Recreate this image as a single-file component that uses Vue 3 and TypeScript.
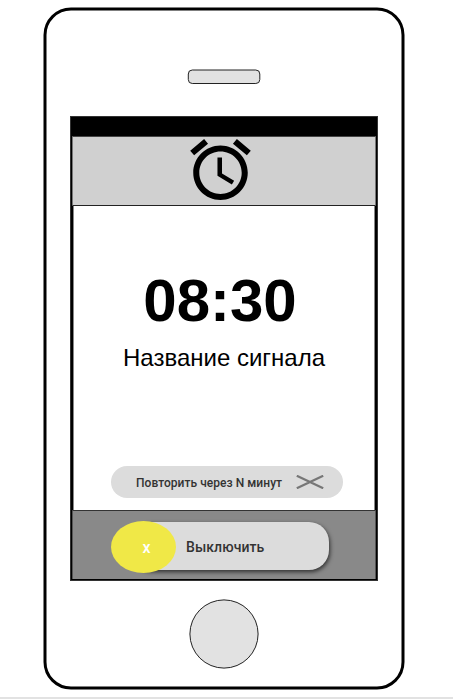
<script setup lang="ts">
import { ref } from 'vue'

const time = ref<string>('08:30')
const title = ref<string>('Название сигнала')
</script>

<template>
  <main class="page">
    <section class="phone">
      <svg class="frame" width="364" height="686" viewBox="0 0 364 686" aria-hidden="true">
        <rect x="3" y="3" width="358" height="679" rx="26" fill="#fff" stroke="#000" stroke-width="3" />
      </svg>
      <svg class="speaker" width="74" height="16" viewBox="0 0 74 16" aria-hidden="true">
        <rect x="1.3" y="1" width="71.5" height="13.5" rx="4" fill="#e2e2e2" stroke="#222" />
      </svg>
      <div class="screen">
        <div class="status"></div>
        <header class="header">
          <svg width="61" height="61" viewBox="2 1.86 20 20.14" aria-hidden="true">
            <path d="M22 5.72l-4.6-3.86-1.29 1.53 4.6 3.86L22 5.72zM7.88 3.39L6.6 1.86 2 5.71l1.29 1.53 4.59-3.85zM12.5 8H11v6l4.75 2.85.75-1.23-4-2.37V8zM12 4c-4.97 0-9 4.03-9 9s4.02 9 9 9c4.97 0 9-4.03 9-9s-4.03-9-9-9zm0 16c-3.87 0-7-3.13-7-7s3.13-7 7-7 7 3.13 7 7-3.13 7-7 7z" />
          </svg>
        </header>
        <div class="content">
          <div class="time">{{ time }}</div>
          <div class="title">{{ title }}</div>
          <button class="snooze" type="button">
            <span>Повторить через N минут</span>
            <svg width="28" height="14" viewBox="0 0 28 14" aria-hidden="true">
              <path d="M.8.8L27.2 13.2M27.2.8L.8 13.2" stroke="#777" stroke-width="2.3" />
            </svg>
          </button>
        </div>
        <footer class="footer">
          <div class="slider">
            <span class="knob">x</span>
            <span class="off">Выключить</span>
          </div>
        </footer>
      </div>
      <svg class="home" width="72" height="72" viewBox="0 0 72 72" aria-hidden="true">
        <circle cx="36" cy="36" r="34.1" fill="#e2e2e2" stroke="#222" />
      </svg>
    </section>
  </main>
</template>

<style>
body {
  background: #fff;
}
</style>

<style scoped>
.page {
  box-sizing: border-box;
  height: 699px;
  padding: 6px 0 0 42px;
  border-bottom: 2px solid #e2e2e2;
  overflow: hidden;
  font-family: "Liberation Sans", Arial, sans-serif;
}
.phone {
  position: relative;
  box-sizing: border-box;
  width: 364px;
  height: 686px;
  padding: 63px 0 0 28px;
  display: flex;
  flex-direction: column;
  align-items: flex-start;
}
.frame {
  position: absolute;
  inset: 0;
  z-index: -1;
}
.speaker {
  margin-left: 117px;
}
.screen {
  box-sizing: border-box;
  width: 308px;
  height: 465px;
  margin-top: 31px;
  border: 1px solid #333;
  background: #000;
  display: flex;
  flex-direction: column;
}
.status {
  height: 19px;
}
.header {
  box-sizing: border-box;
  height: 70px;
  margin: 0 1px;
  padding: 2px 0 0 117px;
  border: 1px solid #777;
  border-top-color: #444;
  border-bottom-color: #222;
  background: #d0d0d0;
}
.header svg {
  display: block;
}
.content {
  box-sizing: border-box;
  height: 304px;
  margin: 0 2px;
  padding: 62px 0 0 37px;
  border-left: 1px solid #888;
  border-right: 1px solid #888;
  background: #fff;
}
.time {
  width: 218px;
  text-align: center;
  font-size: 60px;
  line-height: 66px;
  font-weight: 700;
}
.title {
  margin-top: 10px;
  padding-left: 12px;
  font-size: 24px;
  line-height: 28px;
  white-space: nowrap;
}
.snooze {
  box-sizing: border-box;
  width: 232px;
  height: 32px;
  margin-top: 94px;
  padding: 0 19px 0 25px;
  border: 0;
  border-radius: 16px;
  background: #dcdcdc;
  color: #333;
  display: flex;
  align-items: center;
  justify-content: space-between;
  font: 500 12px Roboto, sans-serif;
  letter-spacing: 0.04px;
  white-space: nowrap;
}
.snooze span {
  padding-top: 2px;
}
.footer {
  box-sizing: border-box;
  height: 69px;
  margin: 0 1px;
  padding: 11px 0 0 58px;
  border: 1px solid #555;
  border-top-color: #333;
  border-bottom: 0;
  background: #898989;
}
.slider {
  width: 198px;
  height: 48px;
  border-radius: 20px;
  background: #dcdcdc;
  box-shadow: 1px 2px 4px rgba(0, 0, 0, 0.65);
  display: flex;
  align-items: center;
  color: #333;
  font: 500 14px Roboto, sans-serif;
  letter-spacing: 0.08px;
}
.knob {
  width: 65px;
  height: 52px;
  margin: 1px 0 0 -20px;
  flex: none;
  border-radius: 50%;
  background: #f0e847;
  color: #fff;
  display: flex;
  align-items: center;
  justify-content: center;
  padding: 1px 0 0 6px;
  box-sizing: border-box;
  font-size: 16px;
}
.off {
  margin-left: 10px;
  padding-top: 2px;
}
.home {
  margin: 17px 0 0 118px;
  flex: none;
}
</style>
